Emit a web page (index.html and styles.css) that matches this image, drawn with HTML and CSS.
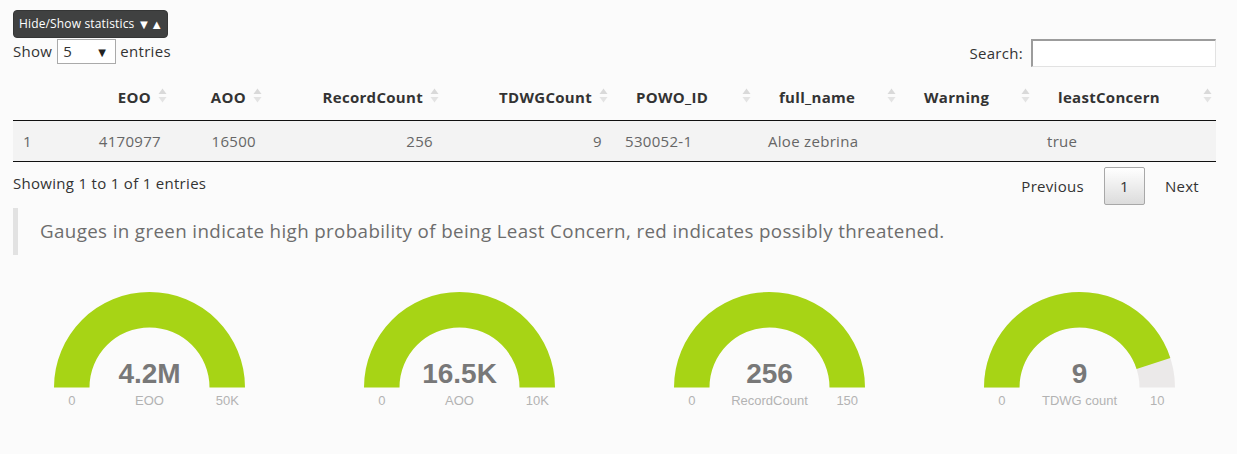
FILE: index.html
```html
<!DOCTYPE html>
<html lang="en">
<head>
<meta charset="utf-8">
<title>Statistics</title>
<link rel="stylesheet" href="styles.css">
</head>
<body>
<div class="page">
  <button class="toggle-btn" type="button">Hide/Show statistics <span class="arrows">▼▲</span></button>

  <div class="controls">
    <div class="length">
      <span>Show</span>
      <span class="select-box"><span class="sel-val">5</span><span class="sel-arrow">▼</span></span>
      <span>entries</span>
    </div>
    <div class="search">
      <label for="q">Search:</label>
      <input id="q" class="search-input" type="text">
    </div>
  </div>

  <table class="data">
    <colgroup>
      <col class="w-idx"><col class="w-eoo"><col class="w-aoo"><col class="w-rc"><col class="w-tdwg">
      <col class="w-powo"><col class="w-full"><col class="w-warn"><col class="w-lc">
    </colgroup>
    <thead>
      <tr>
        <th class="blank"></th>
        <th class="num">EOO<span class="sort"><svg width="9" height="17" viewBox="0 0 9 17"><path d="M0.5 7 L4.5 1.5 L8.5 7 Z" fill="#d9d9d9"/><path d="M0.5 10 L8.5 10 L4.5 15.5 Z" fill="#e3e3e3"/></svg></span></th>
        <th class="num">AOO<span class="sort"><svg width="9" height="17" viewBox="0 0 9 17"><path d="M0.5 7 L4.5 1.5 L8.5 7 Z" fill="#d9d9d9"/><path d="M0.5 10 L8.5 10 L4.5 15.5 Z" fill="#e3e3e3"/></svg></span></th>
        <th class="num">RecordCount<span class="sort"><svg width="9" height="17" viewBox="0 0 9 17"><path d="M0.5 7 L4.5 1.5 L8.5 7 Z" fill="#d9d9d9"/><path d="M0.5 10 L8.5 10 L4.5 15.5 Z" fill="#e3e3e3"/></svg></span></th>
        <th class="num">TDWGCount<span class="sort"><svg width="9" height="17" viewBox="0 0 9 17"><path d="M0.5 7 L4.5 1.5 L8.5 7 Z" fill="#d9d9d9"/><path d="M0.5 10 L8.5 10 L4.5 15.5 Z" fill="#e3e3e3"/></svg></span></th>
        <th class="txt">POWO_ID<span class="sort"><svg width="9" height="17" viewBox="0 0 9 17"><path d="M0.5 7 L4.5 1.5 L8.5 7 Z" fill="#d9d9d9"/><path d="M0.5 10 L8.5 10 L4.5 15.5 Z" fill="#e3e3e3"/></svg></span></th>
        <th class="txt">full_name<span class="sort"><svg width="9" height="17" viewBox="0 0 9 17"><path d="M0.5 7 L4.5 1.5 L8.5 7 Z" fill="#d9d9d9"/><path d="M0.5 10 L8.5 10 L4.5 15.5 Z" fill="#e3e3e3"/></svg></span></th>
        <th class="txt">Warning<span class="sort"><svg width="9" height="17" viewBox="0 0 9 17"><path d="M0.5 7 L4.5 1.5 L8.5 7 Z" fill="#d9d9d9"/><path d="M0.5 10 L8.5 10 L4.5 15.5 Z" fill="#e3e3e3"/></svg></span></th>
        <th class="txt">leastConcern<span class="sort"><svg width="9" height="17" viewBox="0 0 9 17"><path d="M0.5 7 L4.5 1.5 L8.5 7 Z" fill="#d9d9d9"/><path d="M0.5 10 L8.5 10 L4.5 15.5 Z" fill="#e3e3e3"/></svg></span></th>
      </tr>
    </thead>
    <tbody>
      <tr>
        <td class="idx">1</td>
        <td class="num">4170977</td>
        <td class="num">16500</td>
        <td class="num">256</td>
        <td class="num">9</td>
        <td class="txt">530052-1</td>
        <td class="txt">Aloe zebrina</td>
        <td class="txt"></td>
        <td class="txt">true</td>
      </tr>
    </tbody>
  </table>

  <div class="table-footer">
    <div class="info">Showing 1 to 1 of 1 entries</div>
    <div class="paginate">
      <span class="page-btn">Previous</span>
      <span class="page-btn current">1</span>
      <span class="page-btn">Next</span>
    </div>
  </div>

  <blockquote class="note">Gauges in green indicate high probability of being Least Concern, red indicates possibly threatened.</blockquote>

  <div class="gauges">
    <div class="gauge">
      <svg width="310" height="140" viewBox="0 0 310 140">
        <path class="g-fill" d="M60 112.5 A95.5 95.5 0 0 1 251 112.5 L215.5 112.5 A60 60 0 0 0 95.5 112.5 Z"/>
        <text class="g-value" x="155.5" y="108">4.2M</text>
        <text class="g-label" x="77.75" y="130">0</text>
        <text class="g-label" x="155.5" y="130">EOO</text>
        <text class="g-label" x="233.25" y="130">50K</text>
      </svg>
    </div>
    <div class="gauge">
      <svg width="310" height="140" viewBox="0 0 310 140">
        <path class="g-fill" d="M60 112.5 A95.5 95.5 0 0 1 251 112.5 L215.5 112.5 A60 60 0 0 0 95.5 112.5 Z"/>
        <text class="g-value" x="155.5" y="108">16.5K</text>
        <text class="g-label" x="77.75" y="130">0</text>
        <text class="g-label" x="155.5" y="130">AOO</text>
        <text class="g-label" x="233.25" y="130">10K</text>
      </svg>
    </div>
    <div class="gauge">
      <svg width="310" height="140" viewBox="0 0 310 140">
        <path class="g-fill" d="M60 112.5 A95.5 95.5 0 0 1 251 112.5 L215.5 112.5 A60 60 0 0 0 95.5 112.5 Z"/>
        <text class="g-value" x="155.5" y="108">256</text>
        <text class="g-label" x="77.75" y="130">0</text>
        <text class="g-label" x="155.5" y="130">RecordCount</text>
        <text class="g-label" x="233.25" y="130">150</text>
      </svg>
    </div>
    <div class="gauge">
      <svg width="310" height="140" viewBox="0 0 310 140">
        <path class="g-bg" d="M60 112.5 A95.5 95.5 0 0 1 251 112.5 L215.5 112.5 A60 60 0 0 0 95.5 112.5 Z"/>
        <path class="g-fill" d="M60 112.5 A95.5 95.5 0 0 1 246.33 82.99 L212.56 93.96 A60 60 0 0 0 95.5 112.5 Z"/>
        <text class="g-value" x="155.5" y="108">9</text>
        <text class="g-label" x="77.75" y="130">0</text>
        <text class="g-label" x="155.5" y="130">TDWG count</text>
        <text class="g-label" x="233.25" y="130">10</text>
      </svg>
    </div>
  </div>
</div>
</body>
</html>
```

FILE: styles.css
```css
html, body {
  margin: 0;
  padding: 0;
  background: #fbfbfb;
}

body {
  font-family: "Open Sans", "DejaVu Sans", sans-serif;
  font-size: 15px;
  line-height: 21px;
  letter-spacing: 0.3px;
  color: #333;
  overflow: hidden;
}

.page {
  padding: 10px 21px 0 13px;
}

.toggle-btn {
  display: flex;
  align-items: center;
  height: 28px;
  padding: 0 4px 0 5px;
  margin: 0;
  border: 1px solid #353636;
  border-radius: 4px;
  background: #404141;
  color: #fff;
  font-family: "Open Sans", sans-serif;
  font-size: 12px;
  letter-spacing: 0.15px;
  line-height: 26px;
  cursor: pointer;
}

.arrows {
  margin-left: 3px;
  font-size: 13px;
  letter-spacing: 0;
}

.controls {
  display: flex;
  justify-content: space-between;
  align-items: flex-start;
  margin-top: 1px;
  height: 28px;
}

.length {
  display: flex;
  align-items: center;
  gap: 4px;
  height: 25px;
}

.select-box {
  display: flex;
  align-items: center;
  justify-content: space-between;
  box-sizing: border-box;
  width: 59px;
  height: 25px;
  padding: 0 9px 0 5px;
  margin-left: 1px;
  border: 1px solid #aaa;
  background: #fff;
  color: #333;
}

.sel-arrow {
  font-size: 10px;
  line-height: 10px;
  color: #222;
}

.search {
  display: flex;
  align-items: center;
  gap: 8px;
  height: 28px;
}

.search-input {
  box-sizing: border-box;
  width: 185px;
  height: 28px;
  margin: 0;
  padding: 0 4px;
  border: 1px solid #e2e2e2;
  border-top: 2px solid #9c9c9c;
  border-left: 2px solid #9c9c9c;
  background: #fff;
  font-family: "Open Sans", sans-serif;
  font-size: 15px;
}

.data {
  width: 1203px;
  margin-top: 10px;
  border-collapse: collapse;
  table-layout: fixed;
}

.w-idx { width: 62px; }
.w-eoo { width: 96px; }
.w-aoo { width: 95px; }
.w-rc { width: 177px; }
.w-tdwg { width: 169px; }
.w-powo { width: 143px; }
.w-full { width: 145px; }
.w-warn { width: 134px; }
.w-lc { width: 182px; }

.data th {
  position: relative;
  padding: 10px 20px 12px 10px;
  line-height: 21px;
  font-weight: 700;
  color: #333;
  border-bottom: 1px solid #111;
  white-space: nowrap;
}

.data th.num { text-align: right; }
.data th.txt { text-align: left; padding-left: 24px; }

.sort {
  position: absolute;
  right: 4px;
  top: 10px;
  height: 17px;
}

.sort svg { display: block; }

.data td {
  padding: 10px 10px 9px 10px;
  line-height: 21px;
  color: #666;
  background: #f3f3f3;
  border-bottom: 1px solid #111;
  white-space: nowrap;
}

.data td.num { text-align: right; }
.data td.txt { text-align: left; padding-left: 13px; }

.table-footer {
  display: flex;
  justify-content: space-between;
  align-items: flex-start;
  height: 44px;
}

.info {
  padding-top: 11px;
}

.paginate {
  display: flex;
  align-items: center;
  gap: 4px;
  padding-top: 5px;
  margin-right: 1px;
}

.page-btn {
  box-sizing: border-box;
  height: 38px;
  padding: 8px 15px;
  border: 1px solid transparent;
  border-radius: 2px;
  line-height: 21px;
  color: #333;
}

.page-btn.current {
  border: 1px solid #a8a8a8;
  background: linear-gradient(to bottom, #ffffff 0%, #dcdcdc 100%);
}

.note {
  margin: 2px 0 20px 0;
  padding: 10px 20px 10px 22px;
  border-left: 5px solid #e2e2e2;
  font-size: 18.75px;
  line-height: 26.8px;
  letter-spacing: 0.37px;
  color: #6d6d6d;
}

.gauges {
  display: grid;
  grid-template-columns: repeat(4, 310px);
  margin-left: -19px;
}

.gauge svg { display: block; }

.g-fill { fill: #a7d415; }
.g-bg { fill: #ebe9e9; }

.g-value {
  font-family: "Liberation Sans", Arial, sans-serif;
  font-weight: 700;
  font-size: 28px;
  letter-spacing: 0;
  fill: #787878;
  text-anchor: middle;
}

.g-label {
  font-family: "Liberation Sans", Arial, sans-serif;
  font-size: 13px;
  letter-spacing: 0;
  fill: #b3b3b3;
  text-anchor: middle;
}
```
